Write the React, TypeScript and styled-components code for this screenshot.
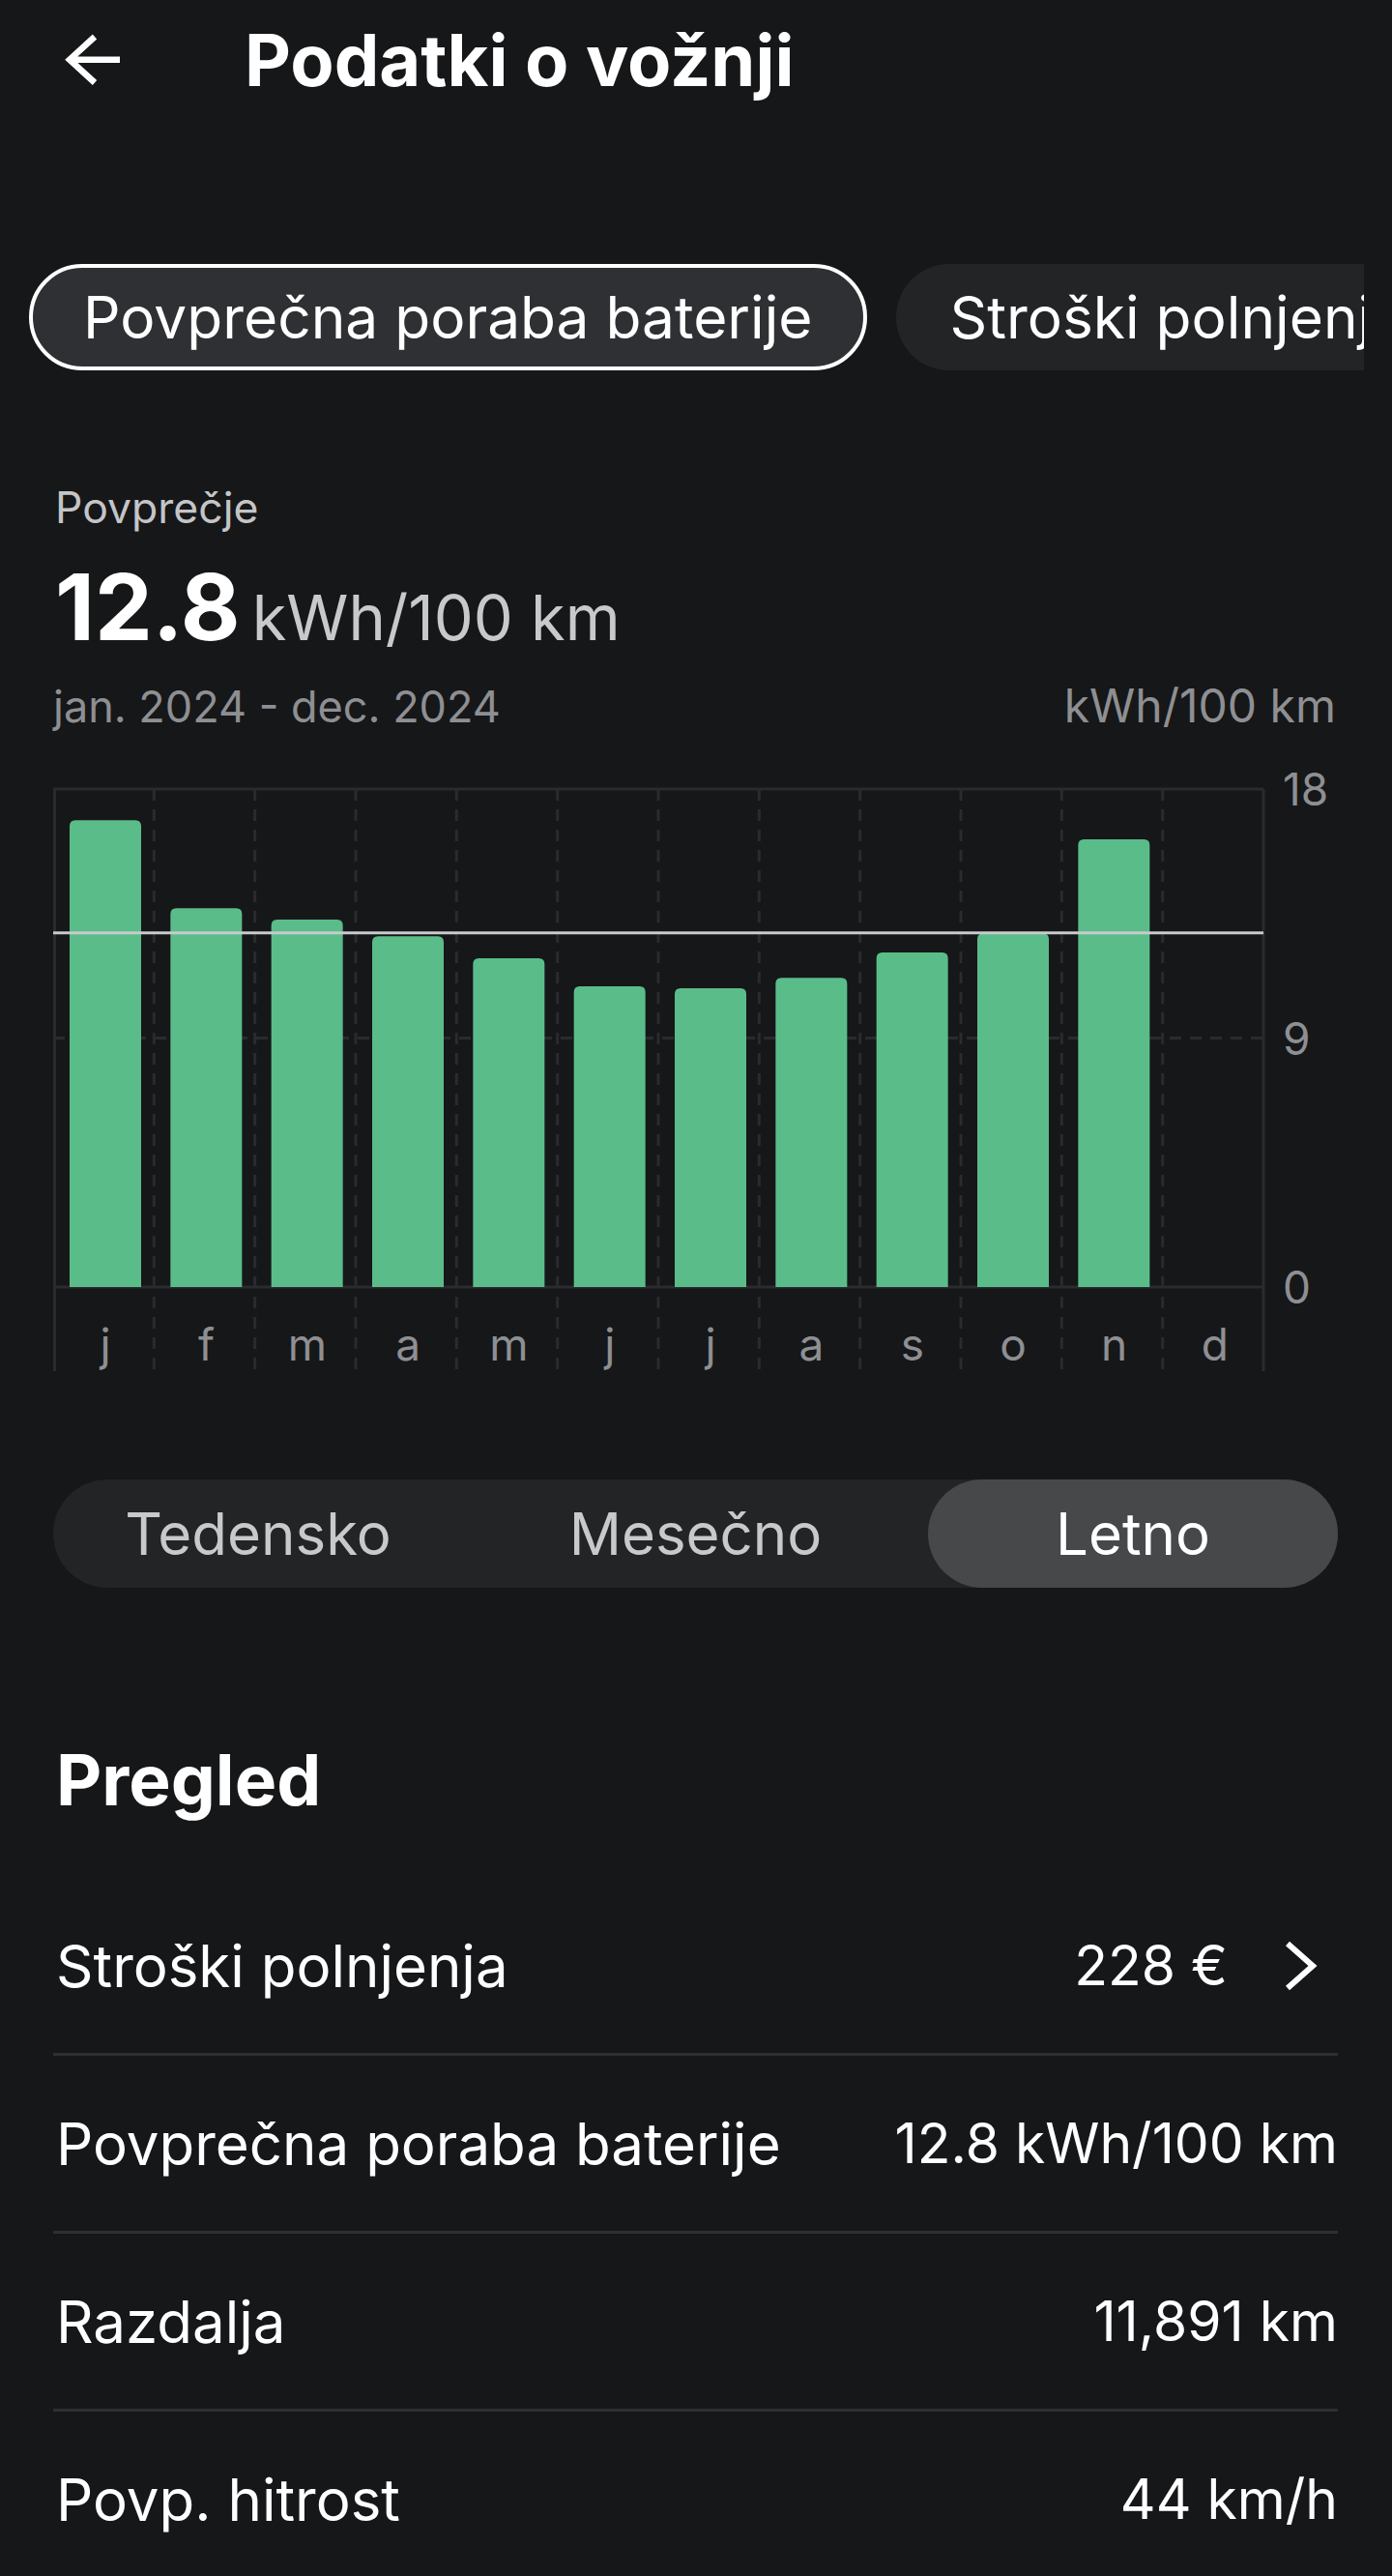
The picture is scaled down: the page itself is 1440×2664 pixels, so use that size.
import React from 'react';
import styled, {createGlobalStyle} from 'styled-components';

const GlobalStyle = createGlobalStyle`
  html, body {
    margin: 0;
    padding: 0;
    background: #161719;
  }
  body {
    font-family: Inter, 'Noto Sans', sans-serif;
    color: #ffffff;
  }
`;

const months = ['j', 'f', 'm', 'a', 'm', 'j', 'j', 'a', 's', 'o', 'n', 'd'];
const values = [16.87, 13.69, 13.28, 12.68, 11.88, 10.87, 10.8, 11.18, 12.09, 12.78, 16.18, 0];
const average = 12.8;

const rows = [
  {label: 'Stroški polnjenja', value: '228 €', link: true},
  {label: 'Povprečna poraba baterije', value: '12.8 kWh/100 km'},
  {label: 'Razdalja', value: '11,891 km'},
  {label: 'Povp. hitrost', value: '44 km/h'},
];

// chart geometry (px)
const PLOT_W = 1252;
const TOP = 36;
const BASE = 551;
const BOTTOM = 638;
const UNIT = (BASE - TOP) / 18;
const COL = PLOT_W / 12;
const BAR_W = 74;
const GRID = '#2a2b2e';

const barPath = (x: number, top: number) => {
  const r = 6;
  return `M${x},${BASE} L${x},${top + r} Q${x},${top} ${x + r},${top} L${x + BAR_W - r},${top} Q${x + BAR_W},${top} ${x + BAR_W},${top + r} L${x + BAR_W},${BASE} Z`;
};

const Chart = () => {
  const avgY = BASE - average * UNIT;
  const midY = (TOP + BASE) / 2;
  return (
    <ChartSvg width={1329} height={640} viewBox="0 0 1329 640">
      {months.slice(1).map((_, i) => (
        <line
          key={'v' + i}
          x1={(i + 1) * COL}
          x2={(i + 1) * COL}
          y1={TOP}
          y2={BOTTOM}
          stroke={GRID}
          strokeWidth={3}
          strokeDasharray="12 9"
        />
      ))}
      <line x1={0} x2={PLOT_W} y1={midY} y2={midY} stroke={GRID} strokeWidth={3} strokeDasharray="12 9" />
      <line x1={1.5} x2={1.5} y1={TOP} y2={BOTTOM} stroke={GRID} strokeWidth={3} />
      <line x1={PLOT_W} x2={PLOT_W} y1={TOP} y2={BOTTOM} stroke={GRID} strokeWidth={3} />
      <line x1={0} x2={PLOT_W} y1={TOP} y2={TOP} stroke={GRID} strokeWidth={3} />
      <line x1={0} x2={PLOT_W} y1={BASE} y2={BASE} stroke={GRID} strokeWidth={3} />

      {values.map((v, i) =>
        v > 0 ? <path key={'b' + i} d={barPath(i * COL + 17, BASE - v * UNIT)} fill="#5abd89" /> : null
      )}

      <line x1={0} x2={PLOT_W} y1={avgY} y2={avgY} stroke="#c9cacc" strokeWidth={3} />

      {months.map((m, i) => (
        <AxisText key={'m' + i} x={i * COL + COL / 2 + 2} y={627} textAnchor="middle">
          {m}
        </AxisText>
      ))}
      <AxisText x={1272} y={TOP} dominantBaseline="central">18</AxisText>
      <AxisText x={1272} y={midY} dominantBaseline="central">9</AxisText>
      <AxisText x={1272} y={BASE} dominantBaseline="central">0</AxisText>
    </ChartSvg>
  );
};

const BackIcon = () => (
  <svg width={60} height={60} viewBox="0 0 60 60">
    <path d="M31,6 L5,29.7 L31,53.5 M5,29.7 L57,29.7" fill="none" stroke="#fff" strokeWidth={6.5} />
  </svg>
);

const Chevron = () => (
  <svg width={40} height={56} viewBox="0 0 40 56">
    <path d="M6,5 L32,28 L6,51" fill="none" stroke="#fff" strokeWidth={6} />
  </svg>
);

const App = () => (
  <Page>
    <GlobalStyle />
    <Header>
      <BackButton>
        <BackIcon />
      </BackButton>
      <Title>Podatki o vožnji</Title>
    </Header>

    <TabStrip>
      <Tab $selected>Povprečna poraba baterije</Tab>
      <Tab>Stroški polnjenja</Tab>
    </TabStrip>

    <Content>
      <Caption>Povprečje</Caption>
      <BigValue>
        <Number>12.8</Number>
        <Unit>kWh/100 km</Unit>
      </BigValue>
      <SubRow>
        <span>jan. 2024 - dec. 2024</span>
        <AxisUnit>kWh/100 km</AxisUnit>
      </SubRow>
      <Chart />

      <Segmented>
        <Segment>Tedensko</Segment>
        <Segment>Mesečno</Segment>
        <Segment $active>Letno</Segment>
      </Segmented>

      <SectionTitle>Pregled</SectionTitle>
      <List>
        {rows.map((row) => (
          <Row key={row.label}>
            <span>{row.label}</span>
            <RowValue>
              {row.value}
              {row.link && (
                <ChevronBox>
                  <Chevron />
                </ChevronBox>
              )}
            </RowValue>
          </Row>
        ))}
      </List>
    </Content>
  </Page>
);

const Page = styled.div`
  width: 1440px;
  min-height: 2664px;
  background: #161719;
  overflow: hidden;
`;

const Header = styled.header`
  display: flex;
  align-items: center;
  height: 124px;
  padding-left: 67px;
`;

const BackButton = styled.div`
  display: flex;
  width: 60px;
  height: 60px;
  margin-right: 126px;
`;

const Title = styled.h1`
  margin: 0;
  font-size: 74px;
  line-height: 124px;
  font-weight: 700;
  color: #ffffff;
`;

const TabStrip = styled.div`
  display: flex;
  gap: 30px;
  margin: 149px 0 0 30px;
  width: 1381px;
  overflow: hidden;
`;

const Tab = styled.div<{$selected?: boolean}>`
  flex: none;
  box-sizing: border-box;
  height: 110px;
  display: flex;
  align-items: center;
  padding: 0 52px;
  border-radius: 55px;
  border: 4px solid ${(p) => (p.$selected ? '#ffffff' : 'transparent')};
  background: ${(p) => (p.$selected ? '#2f3033' : '#232426')};
  font-size: 60.4px;
  color: #ffffff;
  white-space: nowrap;
`;

const Content = styled.div`
  padding: 0 56px 0 55px;
`;

const Caption = styled.div`
  margin-top: 114px;
  font-size: 44.5px;
  line-height: 56px;
  color: #c4c5c7;
  padding-left: 2px;
`;

const BigValue = styled.div`
  display: flex;
  align-items: baseline;
  margin-top: 20px;
  height: 110px;
  line-height: 110px;
  padding-left: 2px;
`;

const Number = styled.span`
  font-size: 95px;
  font-weight: 700;
  color: #ffffff;
`;

const Unit = styled.span`
  margin-left: 12px;
  font-size: 65px;
  color: #c8c9cb;
`;

const SubRow = styled.div`
  display: flex;
  justify-content: space-between;
  align-items: baseline;
  margin-top: 19px;
  font-size: 45px;
  line-height: 56px;
  color: #8e8f92;
`;

const AxisUnit = styled.span`
  font-size: 48px;
  margin-right: 2px;
`;

const ChartSvg = styled.svg`
  display: block;
  margin-top: 21px;
`;

const AxisText = styled.text`
  font-family: Inter, 'Noto Sans', sans-serif;
  font-size: 46px;
  fill: #8e8f92;
`;

const Segmented = styled.div`
  display: grid;
  grid-template-columns: 1fr 1fr 1fr;
  column-gap: 28.5px;
  height: 112px;
  margin-top: 110px;
  border-radius: 56px;
  background: #232426;
`;

const Segment = styled.div<{$active?: boolean}>`
  display: flex;
  align-items: center;
  justify-content: center;
  border-radius: 56px;
  font-size: 60px;
  color: ${(p) => (p.$active ? '#ffffff' : '#c8c9cb')};
  background: ${(p) => (p.$active ? '#47484a' : 'transparent')};
`;

const SectionTitle = styled.h2`
  margin: 149px 0 0;
  font-size: 73px;
  line-height: 100px;
  font-weight: 700;
  color: #ffffff;
  padding-left: 3px;
`;

const List = styled.div`
  margin-top: 51px;
`;

const Row = styled.div`
  display: flex;
  align-items: center;
  justify-content: space-between;
  height: 181px;
  border-bottom: 3px solid #2e2f32;
  font-size: 60px;
  color: #ffffff;
  padding-left: 3px;
`;

const RowValue = styled.span`
  display: flex;
  align-items: center;
  font-size: 57px;
`;

const ChevronBox = styled.span`
  display: flex;
  margin: 0 18px 0 56px;
`;

export default App;
